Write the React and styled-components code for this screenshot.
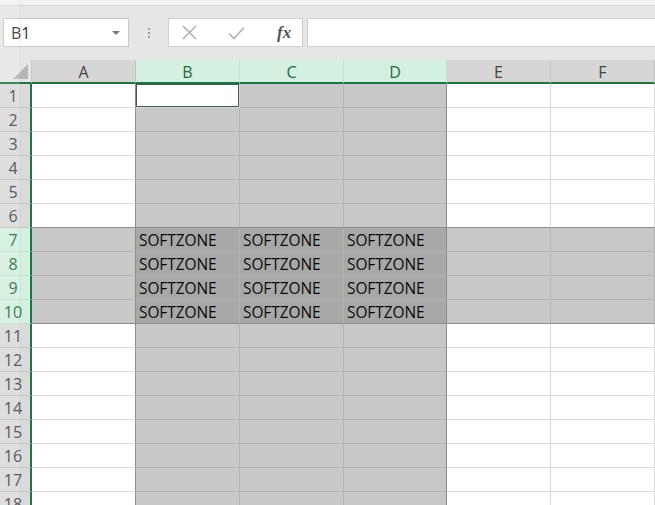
import React from 'react'
import styled, { createGlobalStyle } from 'styled-components'

//!GLOBAL
const Global = createGlobalStyle`
  html, body {
    margin: 0;
    padding: 0;
    width: 655px;
    height: 505px;
    overflow: hidden;
    background: #ffffff;
  }
  * { box-sizing: border-box; }
`

const GREEN = '#217346'
const UI_FONT = `"Open Sans", "Noto Sans", "DejaVu Sans", sans-serif`

//!STYLE COMPONENTS
const Window = styled.div`
  position: relative;
  width: 655px;
  height: 505px;
  overflow: hidden;
  background: #fff;
`
const TitleStrip = styled.div`
  height: 6px;
  background: #f2f2f2;
  border-bottom: 1px solid #d6d6d6;
`
const Toolbar = styled.div`
  display: flex;
  align-items: center;
  height: 54px;
  padding: 0 0 1px 3px;
  background: #e6e6e6;
`
const NameBox = styled.div`
  display: flex;
  align-items: center;
  justify-content: space-between;
  width: 126px;
  height: 29px;
  padding: 0 8px 0 7px;
  background: #fff;
  border: 1px solid #c8c8c8;
  font-family: ${UI_FONT};
  font-size: 16px;
  color: #333;
`
const Caret = styled.span`
  width: 0;
  height: 0;
  border-left: 4px solid transparent;
  border-right: 4px solid transparent;
  border-top: 4px solid #7a7a7a;
`
const Grip = styled.div`
  width: 39px;
  display: flex;
  flex-direction: column;
  align-items: center;
  gap: 2px;
  span {
    width: 2px;
    height: 2px;
    background: #9a9a9a;
  }
`
const FxBox = styled.div`
  display: flex;
  align-items: center;
  width: 135px;
  height: 29px;
  background: #fff;
  border: 1px solid #d0d0d0;
  padding-left: 13px;
  gap: 31px;
`
const Fx = styled.span`
  font-family: "Liberation Serif", "DejaVu Serif", serif;
  font-style: italic;
  font-weight: bold;
  font-size: 17px;
  color: #555;
  margin-left: 1px;
`
const FormulaInput = styled.div`
  flex: 1;
  height: 29px;
  margin-left: 4px;
  background: #fff;
  border: 1px solid #d0d0d0;
  border-right: none;
`
const Sheet = styled.div`
  display: grid;
  grid-template-columns: 32px 104px 104px 104px 103px 104px 104px;
  grid-auto-rows: 24px;
`
const Corner = styled.div`
  position: relative;
  background: #e6e6e6;
  border-bottom: 2px solid ${GREEN};
  border-right: 1px solid #c8c8c8;
  &::after {
    content: '';
    position: absolute;
    right: 3px;
    bottom: 3px;
    width: 0;
    height: 0;
    border-left: 15px solid transparent;
    border-bottom: 15px solid #b6b6b6;
  }
`
const ColHead = styled.div`
  display: flex;
  align-items: center;
  justify-content: center;
  background: ${p => (p.$sel ? '#d3f0e0' : '#d6d6d6')};
  color: ${p => (p.$sel ? '#1f6b41' : '#444')};
  border-bottom: 2px solid ${GREEN};
  border-right: 1px solid ${p => (p.$sel ? '#bfe3cf' : '#c2c2c2')};
  font-family: ${UI_FONT};
  font-size: 16px;
  padding-top: 1px;
`
const RowHead = styled.div`
  display: flex;
  align-items: center;
  justify-content: center;
  padding-right: 4px;
  background: ${p => (p.$sel ? '#d3f0e0' : '#dadada')};
  color: ${p => (p.$sel ? '#1f6b41' : '#444')};
  border-right: 2px solid ${GREEN};
  border-bottom: 1px solid ${p => (p.$sel ? '#bfe3cf' : '#c4c4c4')};
  font-family: ${UI_FONT};
  font-size: 16px;
`
const Cell = styled.div`
  display: flex;
  align-items: center;
  padding: 1px 0 0 3px;
  background: ${p => (p.$shade === 2 ? '#a8a8a8' : p.$shade === 1 ? '#c8c8c8' : '#fff')};
  border-right: 1px solid ${p => (p.$edgeR ? '#8c8c8c' : p.$shade ? '#b4b4b4' : '#d9d9d9')};
  border-bottom: 1px solid ${p => (p.$edgeB ? '#8c8c8c' : p.$shade ? '#b4b4b4' : '#d9d9d9')};
  box-shadow: ${p => (p.$active ? 'inset 0 0 0 1px #3d5c4b' : 'none')};
  font-family: ${UI_FONT};
  font-size: 15.5px;
  letter-spacing: -0.1px;
  color: #0a0a0a;
  white-space: nowrap;
  overflow: hidden;
`
const Glare = styled.div`
  position: absolute;
  left: 0;
  top: 0;
  bottom: 0;
  width: 21px;
  background: rgba(255, 255, 255, 0.12);
  border-right: 1px solid rgba(0, 0, 0, 0.05);
  pointer-events: none;
`

const cols = ['A', 'B', 'C', 'D', 'E', 'F']
const rows = Array.from({ length: 18 }, (_, i) => i + 1)
const selCol = c => c >= 1 && c <= 3
const selRow = r => r >= 7 && r <= 10

//!ICONS
const Cross = () => (
  <svg width="15" height="15" viewBox="0 0 15 15">
    <path d="M1 1L14 14M14 1L1 14" stroke="#a8a8a8" strokeWidth="1.4" fill="none" />
  </svg>
)
const Check = () => (
  <svg width="17" height="14" viewBox="0 0 17 14">
    <path d="M1 7.5L6 12.5L16 1.5" stroke="#b0b0b0" strokeWidth="1.6" fill="none" />
  </svg>
)

//!APP
const App = () => {
  return (
    <Window>
      <Global />
      <TitleStrip />
      <Toolbar>
        <NameBox>
          <span>B1</span>
          <Caret />
        </NameBox>
        <Grip>
          <span />
          <span />
          <span />
        </Grip>
        <FxBox>
          <Cross />
          <Check />
          <Fx>fx</Fx>
        </FxBox>
        <FormulaInput />
      </Toolbar>

      <Sheet>
        <Corner />
        {cols.map((c, i) => (
          <ColHead key={c} $sel={selCol(i)}>{c}</ColHead>
        ))}
        {rows.map(r => (
          <React.Fragment key={r}>
            <RowHead $sel={selRow(r)}>{r}</RowHead>
            {cols.map((c, i) => {
              const active = r === 1 && i === 1
              const shade = active ? 0 : (selCol(i) ? 1 : 0) + (selRow(r) ? 1 : 0)
              return (
                <Cell
                  key={c}
                  $shade={shade}
                  $active={active}
                  $edgeR={i === 0 || i === 3}
                  $edgeB={r === 6 || r === 10}
                >
                  {selCol(i) && selRow(r) ? 'SOFTZONE' : ''}
                </Cell>
              )
            })}
          </React.Fragment>
        ))}
      </Sheet>
      <Glare />
    </Window>
  )
}

export default App
